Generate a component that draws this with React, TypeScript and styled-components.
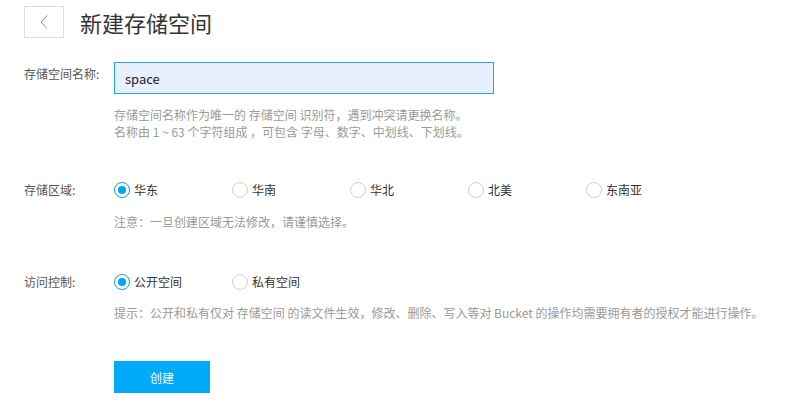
import React, { useState } from "react";
import styled, { createGlobalStyle } from "styled-components";

const Global = createGlobalStyle`
  body {
    margin: 0;
    background: #ffffff;
    font-family: "Microsoft YaHei", "Noto Sans CJK SC", "Noto Sans", sans-serif;
    color: #333;
  }
`;

const Page = styled.div`
  padding: 6px 24px 0 24px;
`;

const Header = styled.div`
  display: flex;
  align-items: center;
  gap: 16px;
  height: 32px;
`;

const BackButton = styled.button`
  width: 40px;
  height: 32px;
  box-sizing: border-box;
  border: 1px solid #dcdcdc;
  background: #fff;
  display: flex;
  align-items: center;
  justify-content: center;
  padding: 0;
  cursor: pointer;
`;

const Title = styled.h1`
  margin: 0;
  font-size: 22px;
  font-weight: 400;
  color: #333;
  line-height: 32px;
`;

const Row = styled.div<{ $top: number; $align?: string }>`
  display: flex;
  align-items: ${(p) => p.$align || "center"};
  margin-top: ${(p) => p.$top}px;
`;

const Label = styled.div<{ $offset?: number }>`
  width: 90px;
  flex: none;
  font-size: 12px;
  line-height: 18px;
  color: #555;
  margin-top: ${(p) => p.$offset || 0}px;
`;

const Input = styled.input`
  width: 380px;
  height: 32px;
  box-sizing: border-box;
  border: 1px solid #1ea7f0;
  background: #e8f0fe;
  padding: 0 10px;
  font-size: 13px;
  font-family: "Microsoft YaHei", "Noto Sans CJK SC", "Noto Sans", sans-serif;
  color: #222;
  outline: none;
  caret-color: #000;
`;

const Help = styled.div<{ $top: number }>`
  margin-top: ${(p) => p.$top}px;
  margin-left: 90px;
  font-size: 12px;
  line-height: 17px;
  color: #9a9a9a;
`;

const RadioGroup = styled.div`
  display: flex;
  align-items: center;
`;

const RadioItem = styled.label`
  display: flex;
  align-items: center;
  width: 118px;
  font-size: 12px;
  line-height: 20px;
  color: #333;
  cursor: pointer;
`;

const Circle = styled.span<{ $on: boolean }>`
  width: 16px;
  height: 16px;
  box-sizing: border-box;
  border-radius: 50%;
  border: 1px solid ${(p) => (p.$on ? "#00a4ef" : "#cfcfcf")};
  display: flex;
  align-items: center;
  justify-content: center;
  margin-right: 4px;
  background: #fff;
  &::after {
    content: "";
    width: 8px;
    height: 8px;
    border-radius: 50%;
    background: ${(p) => (p.$on ? "#00a4ef" : "transparent")};
  }
`;

const Submit = styled.button`
  margin-top: 40px;
  margin-left: 90px;
  width: 96px;
  height: 32px;
  border: none;
  background: #00aaf8;
  color: #fff;
  font-size: 12px;
  font-family: "Microsoft YaHei", "Noto Sans CJK SC", "Noto Sans", sans-serif;
  cursor: pointer;
`;

const regions = ["华东", "华南", "华北", "北美", "东南亚"];
const access = ["公开空间", "私有空间"];

export default function App() {
  const [region, setRegion] = useState(0);
  const [acc, setAcc] = useState(0);
  return (
    <Page>
      <Global />
      <Header>
        <BackButton aria-label="返回">
          <svg width="8" height="14" viewBox="0 0 8 14">
            <path d="M7 0.5 L1 7 L7 13.5" fill="none" stroke="#8a8a8a" strokeWidth="1" />
          </svg>
        </BackButton>
        <Title>新建存储空间</Title>
      </Header>

      <Row $top={24} $align="flex-start">
        <Label $offset={3}>存储空间名称:</Label>
        <Input defaultValue="space" autoFocus />
      </Row>
      <Help $top={12}>
        存储空间名称作为唯一的 存储空间 识别符，遇到冲突请更换名称。
        <br />
        名称由 1 ~ 63 个字符组成 ，可包含 字母、数字、中划线、下划线。
      </Help>

      <Row $top={40}>
        <Label>存储区域:</Label>
        <RadioGroup>
          {regions.map((r, i) => (
            <RadioItem key={r} onClick={() => setRegion(i)}>
              <Circle $on={region === i} />
              {r}
            </RadioItem>
          ))}
        </RadioGroup>
      </Row>
      <Help $top={13}>注意：一旦创建区域无法修改，请谨慎选择。</Help>

      <Row $top={42}>
        <Label>访问控制:</Label>
        <RadioGroup>
          {access.map((r, i) => (
            <RadioItem key={r} onClick={() => setAcc(i)}>
              <Circle $on={acc === i} />
              {r}
            </RadioItem>
          ))}
        </RadioGroup>
      </Row>
      <Help $top={12}>
        提示：公开和私有仅对 存储空间 的读文件生效，修改、删除、写入等对 Bucket 的操作均需要拥有者的授权才能进行操作。
      </Help>

      <Submit>创建</Submit>
    </Page>
  );
}
